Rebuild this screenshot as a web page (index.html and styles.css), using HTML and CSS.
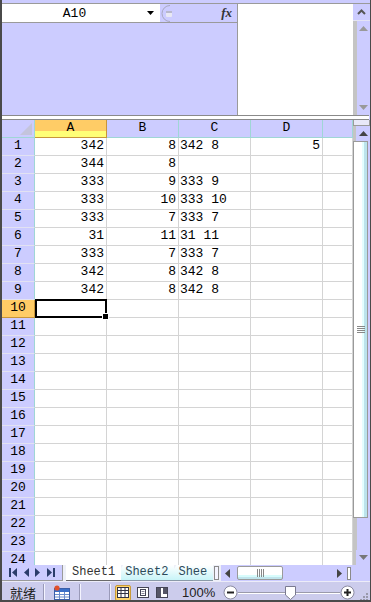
FILE: index.html
```html
<!DOCTYPE html>
<html lang="zh">
<head>
    <meta charset="UTF-8">
    <meta name="viewport" content="width=device-width, initial-scale=1">
    <title>Sheet</title>
    <link rel="stylesheet" href="styles.css">
</head>
<body>
    <div class="app">
        <div class="top">
            <div class="top-left">
                <div class="formula">
                    <div class="namebox">
                        <span class="name">A10</span>
                        <svg class="dd" width="7" height="4" viewBox="0 0 7 4"><polygon points="0,0 7,0 3.5,4" fill="#000"/></svg>
                    </div>
                    <svg class="fbtn" width="16" height="17" viewBox="0 0 16 17">
                        <path d="M9 0.5 A8 8 0 0 0 9 16.5" fill="none" stroke="#a8a8c0"/>
                        <rect x="5" y="6" width="6" height="6" rx="1" fill="#e8e8f4"/>
                        <rect x="5" y="6" width="6" height="2" fill="#b8b8cc"/>
                    </svg>
                    <span class="fx">fx</span>
                </div>
            </div>
            <div class="edit"></div>
            <div class="vbar small">
                <div class="btn-top">
                    <svg width="9" height="6" viewBox="0 0 9 6"><polyline points="1,5 4.5,1.5 8,5" fill="none" stroke="#555" stroke-width="2"/></svg>
                </div>
                <div class="track">
                    <svg class="tri-up" width="9" height="5" viewBox="0 0 9 5"><polygon points="0,5 9,5 4.5,0" fill="#999"/></svg>
                    <svg class="tri-down" width="9" height="5" viewBox="0 0 9 5"><polygon points="0,0 9,0 4.5,5" fill="#999"/></svg>
                </div>
            </div>
        </div>
        <div class="split"></div>
        <div class="middle">
            <div class="grid" id="grid"></div>
            <div class="vbar">
                <div class="vsplit"></div>
                <div class="arrow">
                    <svg width="9" height="5" viewBox="0 0 9 5"><polygon points="0,5 9,5 4.5,0" fill="#444"/></svg>
                </div>
                <div class="thumb">
                    <svg width="8" height="7" viewBox="0 0 8 7"><path d="M0 0.5H8M0 2.5H8M0 4.5H8M0 6.5H8" stroke="#888"/></svg>
                </div>
                <div class="track"></div>
                <div class="arrow">
                    <svg width="9" height="5" viewBox="0 0 9 5"><polygon points="0,0 9,0 4.5,5" fill="#777"/></svg>
                </div>
            </div>
        </div>
        <div class="tabbar">
            <div class="nav">
                <svg width="8" height="9" viewBox="0 0 8 9"><rect width="2" height="9" fill="#2b3d6b"/><polygon points="8,0 3,4.5 8,9" fill="#2b3d6b"/></svg>
                <svg width="5" height="9" viewBox="0 0 5 9"><polygon points="5,0 0,4.5 5,9" fill="#2b3d6b"/></svg>
                <svg width="5" height="9" viewBox="0 0 5 9"><polygon points="0,0 5,4.5 0,9" fill="#2b3d6b"/></svg>
                <svg width="8" height="9" viewBox="0 0 8 9"><polygon points="0,0 5,4.5 0,9" fill="#2b3d6b"/><rect x="6" width="2" height="9" fill="#2b3d6b"/></svg>
            </div>
            <div class="tabs">
                <span class="tab active">Sheet1</span>
                <span class="tab">Sheet2</span>
                <span class="tab cut">Shee</span>
            </div>
            <div class="tsplit"></div>
            <div class="hbar">
                <svg width="5" height="9" viewBox="0 0 5 9"><polygon points="5,0 0,4.5 5,9" fill="#444"/></svg>
                <div class="hthumb">
                    <svg width="7" height="8" viewBox="0 0 7 8"><path d="M0.5 0V8M2.5 0V8M4.5 0V8M6.5 0V8" stroke="#888"/></svg>
                </div>
                <span class="hfill"></span>
                <svg width="5" height="9" viewBox="0 0 5 9"><polygon points="0,0 5,4.5 0,9" fill="#444"/></svg>
                <span class="hend"></span>
            </div>
            <div class="corner"></div>
        </div>
        <div class="status">
            <span class="ready">就绪</span>
            <span class="sep"></span>
            <svg class="sicon" width="18" height="16" viewBox="0 0 18 16">
                <rect x="1.5" y="3.5" width="15" height="11" fill="#fff" stroke="#3a5ea8"/>
                <rect x="2" y="4" width="14" height="3" fill="#3a6fc8"/>
                <path d="M2 9.5H16M2 12H16M6.5 7V14M11.5 7V14" stroke="#6a8ccc"/>
                <circle cx="4" cy="3" r="2.6" fill="#e0502a"/>
            </svg>
            <span class="sep"></span>
            <span class="sep wide"></span>
            <span class="view on">
                <svg width="12" height="11" viewBox="0 0 12 11"><rect x="0.5" y="0.5" width="11" height="10" fill="#fff" stroke="#334"/><path d="M0 3.5H12M0 6.5H12M4 0V11M8 0V11" stroke="#334"/></svg>
            </span>
            <span class="view">
                <svg width="12" height="11" viewBox="0 0 12 11"><rect x="0.5" y="0.5" width="11" height="10" fill="#fff" stroke="#445"/><rect x="3.5" y="2.5" width="5" height="6" fill="none" stroke="#445"/><path d="M4.5 4.5H7.5M4.5 6.5H7.5" stroke="#889"/></svg>
            </span>
            <span class="view">
                <svg width="12" height="11" viewBox="0 0 12 11"><rect x="0.5" y="0.5" width="11" height="10" fill="#fff" stroke="#445"/><rect x="1" y="1" width="4" height="9" fill="#556"/><rect x="7" y="1" width="4" height="6" fill="#556"/></svg>
            </span>
            <span class="zoom">100%</span>
            <svg class="zbtn" width="15" height="15" viewBox="0 0 15 15"><circle cx="7.5" cy="7.5" r="6.5" fill="#fff" stroke="#8a8aa0"/><path d="M4 7.5H11" stroke="#222" stroke-width="2"/></svg>
            <span class="slider">
                <svg class="knob" width="11" height="14" viewBox="0 0 11 14"><path d="M0.5 0.5H10.5V9L5.5 13.5L0.5 9Z" fill="#fff" stroke="#7a7a90"/></svg>
            </span>
            <svg class="zbtn" width="15" height="15" viewBox="0 0 15 15"><circle cx="7.5" cy="7.5" r="6.5" fill="#fff" stroke="#8a8aa0"/><path d="M4 7.5H11M7.5 4V11" stroke="#222" stroke-width="2"/></svg>
            <svg class="grip" width="9" height="9" viewBox="0 0 9 9"><g fill="#99a"><rect x="7" y="1" width="2" height="2"/><rect x="4" y="4" width="2" height="2"/><rect x="7" y="4" width="2" height="2"/><rect x="1" y="7" width="2" height="2"/><rect x="4" y="7" width="2" height="2"/><rect x="7" y="7" width="2" height="2"/></g></svg>
        </div>
    </div>

    <script>
        (function () {
            var grid = document.getElementById("grid"),
                cols = ["A", "B", "C", "D", ""],
                data = [
                    ["342", "8", "342 8", "5"],
                    ["344", "8", "", ""],
                    ["333", "9", "333 9", ""],
                    ["333", "10", "333 10", ""],
                    ["333", "7", "333 7", ""],
                    ["31", "11", "31 11", ""],
                    ["333", "7", "333 7", ""],
                    ["342", "8", "342 8", ""],
                    ["342", "8", "342 8", ""]
                ],
                html = '<div class="hd corner-cell"><svg width="12" height="12" viewBox="0 0 12 12"><polygon points="12,0 12,12 0,12" fill="#c4c4dc"/></svg></div>'

            // the last column is only partly in view, its letter is off screen
            cols.forEach(c => {
                html += `<div class="hd col${c == "A" ? " cur" : ""}">${c}</div>`
            })

            for (var r = 1; r <= 24; r++) {
                var row = data[r - 1] || []
                html += `<div class="hd row${r == 10 ? " cur" : ""}">${r}</div>`
                html += `<div class="cell num${r == 10 ? " sel" : ""}">${row[0] || ""}</div>`
                html += `<div class="cell num">${row[1] || ""}</div>`
                html += `<div class="cell txt">${row[2] || ""}</div>`
                html += `<div class="cell num">${row[3] || ""}</div>`
                html += `<div class="cell"></div>`
            }

            grid.innerHTML = html
        })()
    </script>
</body>
</html>
```

FILE: styles.css
```css
html,
body {
    margin: 0;
    padding: 0;
}

.app {
    width: 371px;
    height: 602px;
    box-sizing: border-box;
    border-left: 2px solid #4a4a4a;
    border-right: 1px solid #4a4a4a;
    border-bottom: 2px solid #4a4a4a;
    display: flex;
    flex-direction: column;
    background-color: #ccccff;
    overflow: hidden;
    font-family: "Liberation Mono", "DejaVu Sans Mono", monospace;
    font-size: 13px;
    color: #000;
}

/* top pane */

.top {
    height: 112px;
    flex: none;
    display: flex;
    box-sizing: border-box;
    margin-top: 3px;
    border-top: 1px solid #9a9a9a;
}

.top-left {
    width: 236px;
    flex: none;
    box-sizing: border-box;
    border-right: 1px solid #9a9a9a;
}

.formula {
    height: 19px;
    box-sizing: border-box;
    display: flex;
    align-items: center;
    border-bottom: 1px solid #9a9a9a;
}

.namebox {
    width: 158px;
    height: 18px;
    background-color: #fff;
    display: flex;
    align-items: center;
    box-sizing: border-box;
    padding-right: 6px;
}

.name {
    flex: 1;
    text-align: center;
    font-size: 13px;
}

.fbtn {
    margin-left: 1px;
}

.fx {
    margin-left: auto;
    margin-right: 5px;
    font-family: "Liberation Serif", serif;
    font-style: italic;
    font-weight: bold;
    font-size: 13px;
    color: #333;
}

.edit {
    width: 115px;
    flex: none;
    background-color: #fff;
}

.vbar {
    width: 17px;
    flex: none;
    display: flex;
    flex-direction: column;
    align-items: stretch;
}

.btn-top {
    height: 16px;
    display: flex;
    justify-content: center;
    align-items: center;
    border-bottom: 1px solid #e4e4f4;
}

.vbar .track {
    flex: 1;
    background: linear-gradient(to right, #c4c4c4 4px, #ccccff 4px);
    display: flex;
    flex-direction: column;
    justify-content: space-between;
    align-items: center;
    padding: 5px 0 5px 4px;
}

.split {
    height: 5px;
    flex: none;
    box-sizing: border-box;
    border-top: 1px solid #8a8a8a;
    border-bottom: 1px solid #8a8a8a;
    background-color: #fff;
    margin-right: 1px;
}

/* sheet grid */

.middle {
    height: 445px;
    flex: none;
    display: flex;
}

.grid {
    width: 351px;
    flex: none;
    display: grid;
    grid-template-columns: 33px repeat(4, 72px) 30px;
    grid-auto-rows: 18px;
    overflow: hidden;
    background-color: #fff;
}

.hd {
    background-color: #ccccff;
    box-sizing: border-box;
    text-align: center;
    line-height: 16px;
    border-right: 1px solid #9fd6d6;
    border-bottom: 1px solid #9fd6d6;
}

.hd.row {
    border-bottom-color: #e2e2f2;
}

.hd.cur {
    background-color: #ffcc66;
    border-right-color: #c8963a;
}

.hd.col.cur {
    background: linear-gradient(#ffcc66 11px, #ffff77 11px);
    border-bottom-color: #c8963a;
}

.hd.row.cur {
    border-bottom-color: #c8963a;
}

.corner-cell {
    display: flex;
    justify-content: flex-end;
    align-items: flex-end;
    padding: 0 2px 2px 0;
}

.cell {
    box-sizing: border-box;
    border-right: 1px solid #d4d4d4;
    border-bottom: 1px solid #d4d4d4;
    line-height: 16px;
    padding: 0 2px;
    white-space: nowrap;
    overflow: hidden;
}

.cell.num {
    text-align: right;
}

.cell.txt {
    padding-left: 1px;
}

.cell.sel {
    position: relative;
    overflow: visible;
}

.cell.sel::after {
    content: "";
    position: absolute;
    top: -1px;
    left: 0;
    right: -1px;
    bottom: -1px;
    border: 2px solid #000;
}

.cell.sel::before {
    content: "";
    position: absolute;
    right: -3px;
    bottom: -3px;
    width: 5px;
    height: 5px;
    background-color: #000;
    border: 1px solid #fff;
    z-index: 1;
}

.middle .vbar .vsplit {
    height: 6px;
    box-sizing: border-box;
    border: 1px solid #9a9a9a;
    border-top: none;
    background-color: #e8e8f8;
}

.middle .vbar .arrow {
    height: 15px;
    flex: none;
    display: flex;
    justify-content: center;
    align-items: center;
    padding-left: 3px;
    background: linear-gradient(to right, #c4c4c4 3px, #ccccff 3px);
}

.middle .vbar .thumb {
    height: 377px;
    flex: none;
    box-sizing: border-box;
    margin-right: 2px;
    border: 1px solid #9a9a9a;
    background: linear-gradient(to right, #fff 0 8px, #e4ffff 8px 10px, #bce4ec 10px);
    display: flex;
    justify-content: center;
    align-items: center;
}

.middle .vbar .track {
    padding: 0;
}

/* sheet tabs */

.tabbar {
    height: 16px;
    flex: none;
    display: flex;
    background-color: #eef0f8;
}

.nav {
    width: 61px;
    flex: none;
    box-sizing: border-box;
    display: flex;
    align-items: center;
    justify-content: space-around;
    padding: 0 4px;
    background-color: #ccccff;
    border-right: 1px solid #9a9a9a;
    border-bottom: 1px solid #9a9a9a;
}

.tabs {
    width: 151px;
    flex: none;
    display: flex;
    overflow: hidden;
    padding-left: 3px;
    box-sizing: border-box;
    font-size: 12px;
}

.tab {
    flex: none;
    line-height: 15px;
    padding: 0 6px 0 12px;
    background: linear-gradient(#fff, #c8f4f8);
    color: #2c4a5a;
    clip-path: polygon(10px 0, 100% 0, 100% 100%, 0 100%);
    margin-left: -8px;
    border-bottom: 1px solid #8a9aa8;
}

.tab.active {
    background: #fff;
    color: #333;
    margin-left: 0;
    padding: 0 6px;
    clip-path: none;
    border-bottom: 1px solid #6a6a6a;
    z-index: 1;
}

.tsplit {
    width: 5px;
    flex: none;
    box-sizing: border-box;
    border: 1px solid #8a8a8a;
    background-color: #f4f4ff;
    margin: 1px 2px 1px 0;
}

.hbar {
    flex: 1;
    display: flex;
    align-items: center;
    background-color: #ccccff;
    padding-left: 4px;
    gap: 5px;
}

.hthumb {
    width: 46px;
    height: 14px;
    box-sizing: border-box;
    border: 1px solid #9a9a9a;
    border-radius: 2px;
    background: linear-gradient(#fff 0 8px, #d8fcfc 8px 10px, #c0e4ec 10px);
    display: flex;
    justify-content: center;
    align-items: center;
    margin-left: 2px;
}

.hfill {
    flex: 1;
}

.hend {
    width: 4px;
    height: 13px;
    box-sizing: border-box;
    border: 1px solid #8a8a8a;
    background-color: #fff;
    margin-right: 2px;
}

.tabbar .corner {
    width: 17px;
    flex: none;
    background-color: #ccccff;
}

/* status bar */

.status {
    height: 22px;
    flex: none;
    box-sizing: border-box;
    display: flex;
    align-items: center;
    background-color: #ccccec;
    border-top: 1px solid #ececf8;
    color: #222;
}

.ready {
    width: 33px;
    padding-left: 8px;
    font-family: "Noto Sans CJK SC", sans-serif;
    font-size: 13px;
}

.sep {
    width: 1px;
    height: 18px;
    background-color: #9a9ab8;
    border-right: 1px solid #f4f4ff;
    margin-right: 8px;
}

.sicon {
    margin-right: 8px;
}

.sep.wide {
    margin-left: 20px;
    margin-right: 4px;
}

.view {
    width: 16px;
    height: 16px;
    box-sizing: border-box;
    display: flex;
    justify-content: center;
    align-items: center;
    margin-right: 3px;
    border: 1px solid transparent;
}

.view.on {
    background-color: #ffd46a;
    border-color: #c89a3a;
    border-radius: 2px;
    margin-right: 4px;
}

.zoom {
    margin-left: 9px;
    width: 41px;
    font-family: "Liberation Sans", sans-serif;
    font-size: 13px;
}

.slider {
    flex: none;
    width: 102px;
    height: 16px;
    display: flex;
    align-items: center;
    background: linear-gradient(transparent 7px, #9a9aaa 7px 8px, #fff 8px 9px, transparent 9px);
}

.knob {
    margin-left: 47px;
}

.grip {
    margin-left: auto;
    margin-right: 2px;
    align-self: flex-end;
    margin-bottom: 2px;
}
```
